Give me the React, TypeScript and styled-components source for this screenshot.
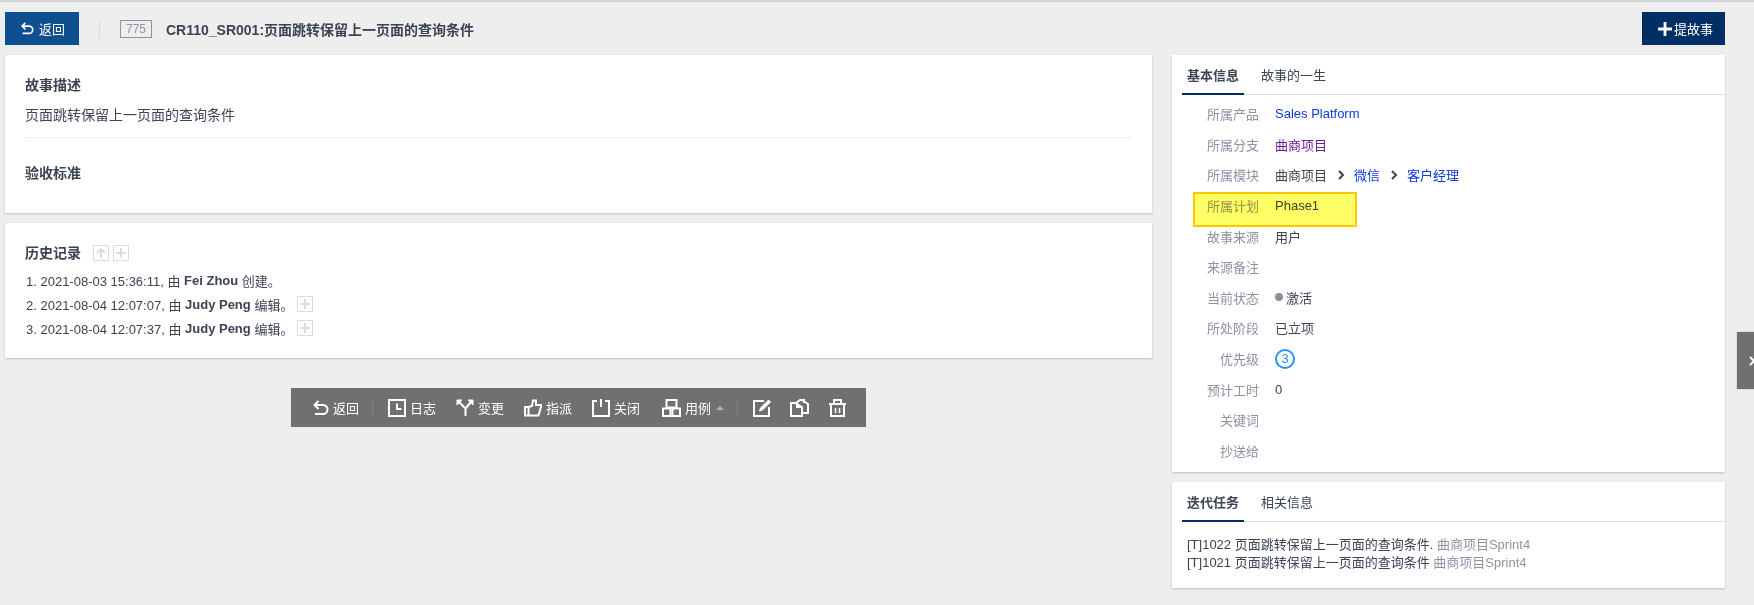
import * as React from 'react';
import styled, { createGlobalStyle } from 'styled-components';

const GlobalStyle = createGlobalStyle`
    html, body {
        margin: 0;
        padding: 0;
        background: #eeeeee;
    }
    body {
        font-family: "Liberation Sans", "Noto Sans CJK SC", sans-serif;
        font-size: 13px;
        color: #3c4353;
    }
`;

const Page = styled.div`
    position: relative;
    height: 605px;
    overflow: hidden;
    box-sizing: border-box;
    border-top: 2px solid #d2d2d2;
    padding: 10px 29px 0 5px;
`;

const Header = styled.div`
    display: flex;
    align-items: center;
    height: 33px;
`;

const BackButton = styled.div`
    display: flex;
    align-items: center;
    gap: 5px;
    width: 74px;
    height: 33px;
    box-sizing: border-box;
    padding-left: 15px;
    background: #0e4f8f;
    color: #fff;
`;

const HeaderDivider = styled.div`
    width: 1px;
    height: 20px;
    margin: 0 20px;
    background: #dcdcdc;
`;

const IdTag = styled.span`
    box-sizing: border-box;
    width: 32px;
    height: 18px;
    line-height: 16px;
    text-align: center;
    font-size: 12px;
    color: #8d93a5;
    border: 1px solid #8d93a5;
`;

const Title = styled.h1`
    flex: 1;
    margin: 0 0 0 14px;
    font-size: 14px;
    font-weight: 700;
    color: #3c4353;
`;

const SubmitButton = styled.div`
    display: flex;
    align-items: center;
    gap: 2px;
    width: 83px;
    height: 33px;
    box-sizing: border-box;
    padding-left: 16px;
    background: #002f65;
    color: #fff;
`;

const Columns = styled.div`
    display: grid;
    grid-template-columns: 1147px 553px;
    gap: 20px;
    margin-top: 10px;
`;

const Column = styled.div`
    display: flex;
    flex-direction: column;
    gap: 10px;
`;

const Card = styled.section`
    background: #fff;
    box-shadow: 0 1px 2px rgba(0, 0, 0, 0.2);
`;

const StoryCard = styled(Card)`
    height: 158px;
    box-sizing: border-box;
    padding: 20px 20px 0 20px;
`;

const HistoryCard = styled(Card)`
    height: 135px;
    box-sizing: border-box;
    padding: 21px 20px 0 20px;
`;

const SectionTitle = styled.div`
    font-weight: 700;
    font-size: 14px;
    line-height: 20px;
    color: #3c4353;
`;

const Description = styled.div`
    margin-top: 10px;
    font-size: 14px;
    line-height: 20px;
    padding-bottom: 12px;
    border-bottom: 1px solid #eeeeee;
`;

const AcceptTitle = styled(SectionTitle)`
    margin-top: 25px;
`;

const HistoryHead = styled.div`
    display: flex;
    align-items: center;
    height: 18px;
`;

const HistoryTitle = styled(SectionTitle)`
    margin-right: 12px;
`;

const SquareBtn = styled.span<{ $gap?: number }>`
    display: inline-flex;
    align-items: center;
    justify-content: center;
    box-sizing: border-box;
    width: 16px;
    height: 16px;
    margin-left: ${p => p.$gap ?? 0}px;
    border: 1px solid #d9dce6;
    color: #d9dce6;
`;

const HistoryList = styled.ol`
    list-style: none;
    margin: 6px 0 0 1px;
    padding: 0;
`;

const HistoryItem = styled.li`
    display: flex;
    align-items: center;
    height: 24px;
    white-space: pre;
    b {
        font-weight: 700;
    }
`;

const ToolbarWrap = styled.div`
    display: flex;
    justify-content: center;
    margin-top: 20px;
`;

const Toolbar = styled.div`
    display: flex;
    align-items: center;
    width: 575px;
    height: 39px;
    box-sizing: border-box;
    padding-left: 21px;
    background: #707070;
    color: #fff;
`;

const ToolButton = styled.div<{ $ml?: number }>`
    display: flex;
    align-items: center;
    gap: 4px;
    margin-left: ${p => p.$ml ?? 20}px;
`;

const ToolDivider = styled.div`
    width: 1px;
    height: 20px;
    margin: 0 15px 0 13px;
    background: #808080;
`;

const Caret = styled.span`
    width: 0;
    height: 0;
    margin-left: 1px;
    border-left: 4px solid transparent;
    border-right: 4px solid transparent;
    border-bottom: 4px solid #b5b5b5;
`;

const InfoCard = styled(Card)`
    height: 417px;
    box-sizing: border-box;
    padding: 0 0 0 10px;
`;

const TaskCard = styled(Card)`
    height: 106px;
    box-sizing: border-box;
    padding: 0 0 0 10px;
`;

const Tabs = styled.div`
    display: flex;
    height: 40px;
    box-sizing: border-box;
    border-bottom: 1px solid #dddddd;
`;

const Tab = styled.div<{ $active?: boolean }>`
    box-sizing: border-box;
    height: 40px;
    padding: ${p => (p.$active ? '0 5px' : '0 0 0 17px')};
    line-height: 42px;
    font-weight: ${p => (p.$active ? 700 : 400)};
    border-bottom: ${p => (p.$active ? '2px solid #002f65' : 'none')};
    color: #3c4353;
`;

const InfoList = styled.div`
    display: flex;
    flex-direction: column;
    padding-top: 3.5px;
`;

const InfoRow = styled.div<{ $marked?: boolean }>`
    position: relative;
    display: flex;
    align-items: center;
    height: 30.6px;
    ${p => p.$marked && `
        &::after {
            content: '';
            position: absolute;
            left: 11px;
            top: 2px;
            width: 164px;
            height: 35px;
            box-sizing: border-box;
            background: #ffff66;
            border: 2px solid #ffc800;
            mix-blend-mode: multiply;
        }
    `}
`;

const InfoLabel = styled.div`
    width: 77px;
    text-align: right;
    margin-right: 16px;
    color: #8d93a5;
`;

const InfoValue = styled.div`
    display: flex;
    align-items: center;
    color: #3c4353;
`;

const LinkText = styled.span<{ $visited?: boolean }>`
    color: ${p => (p.$visited ? '#6a1b9a' : '#0c3bd6')};
`;

const Sep = styled.span`
    display: inline-flex;
    margin: 0 9px 0 11px;
    color: #3c4353;
`;

const StatusDot = styled.span`
    width: 8px;
    height: 8px;
    margin-right: 3px;
    border-radius: 50%;
    background: #8a8fa0;
`;

const PriorityBadge = styled.span`
    box-sizing: border-box;
    width: 20px;
    height: 20px;
    line-height: 16px;
    text-align: center;
    border: 2px solid #2196f3;
    border-radius: 50%;
    color: #2196f3;
`;

const TaskList = styled.div`
    padding: 14px 0 0 5px;
    line-height: 18px;
`;

const TaskMeta = styled.span`
    color: #8d93a5;
`;

const SideHandle = styled.div`
    position: absolute;
    right: 0;
    top: 329px;
    box-sizing: border-box;
    width: 18px;
    height: 59px;
    padding-left: 12px;
    background: #707070;
    border: 1px solid #dcdcdc;
    border-right: none;
    color: #fff;
    display: flex;
    align-items: center;
    overflow: hidden;
`;

const Svg = styled.svg.attrs({ fill: 'none', stroke: 'currentColor', strokeWidth: 2 })`
    display: block;
    flex: none;
`;

const UndoIcon = ({ size = 17 }: { size?: number }) => (
    <Svg width={size} height={size - 1} viewBox="0 0 17 16" strokeWidth="2.6">
        <path d="M6.5 1L2.5 5l4 4" />
        <path d="M2.5 5H11a4.5 4.5 0 0 1 0 9H3" />
    </Svg>
);

const LogIcon = () => (
    <Svg width="18" height="18" viewBox="0 0 18 18">
        <rect x="1" y="1" width="16" height="16" />
        <path d="M9 4.5V10h4.5" />
    </Svg>
);

const ForkIcon = () => (
    <Svg width="18" height="18" viewBox="0 0 18 18" strokeWidth="2.4">
        <path d="M9.5 17V9.5L3 3" />
        <path d="M9.5 9.5L15 3" />
        <path d="M1 1h5L1 6zM17 1h-5l5 5z" fill="currentColor" strokeWidth="1" />
    </Svg>
);

const ThumbIcon = () => (
    <Svg width="18" height="18" viewBox="0 0 18 18">
        <path d="M1 8h3.5v8.5H1z" />
        <path d="M4.5 8L8 7l1-5.5h3V6h5.5l-3 10.5H4.5" />
    </Svg>
);

const CloseIcon = () => (
    <Svg width="18" height="18" viewBox="0 0 18 18">
        <path d="M5 2H1v15h16V2h-4" />
        <path d="M9 0v8" />
    </Svg>
);

const CaseIcon = () => (
    <Svg width="19" height="18" viewBox="0 0 19 18">
        <rect x="4.5" y="1" width="10" height="7.5" />
        <rect x="1" y="9.5" width="7.5" height="7.5" />
        <rect x="10.5" y="9.5" width="7.5" height="7.5" />
    </Svg>
);

const EditIcon = () => (
    <Svg width="18" height="18" viewBox="0 0 18 18">
        <path d="M11 2H1v15h15V8" />
        <path d="M6.5 12l1-3 8-8 2 2-8 8z" fill="currentColor" strokeWidth="1" />
    </Svg>
);

const CopyIcon = () => (
    <Svg width="19" height="18" viewBox="0 0 19 18">
        <path d="M5 4H1v13h11V8z" />
        <path d="M6 4l4-3h4v3M12 1l6 4v9h-6" />
        <path d="M7 4v4h5" />
    </Svg>
);

const TrashIcon = () => (
    <Svg width="19" height="18" viewBox="0 0 19 18">
        <path d="M1 5h17M6 4V1h7v3" />
        <path d="M3 5v12h13V5" />
        <path d="M7.5 9v5M11.5 9v5" strokeWidth="1.5" />
    </Svg>
);

const PlusGlyph = ({ size = 10, weight = 1.6 }: { size?: number; weight?: number }) => (
    <Svg width={size} height={size} viewBox="0 0 10 10" strokeWidth={weight}>
        <path d="M5 0v10M0 5h10" />
    </Svg>
);

const UpGlyph = () => (
    <Svg width="10" height="10" viewBox="0 0 10 10" strokeWidth="1.6">
        <path d="M5 10V1M1 5l4-4 4 4" />
    </Svg>
);

const Chevron = () => (
    <Svg width="7" height="10" viewBox="0 0 7 10" strokeWidth="1.6">
        <path d="M1 1l4 4-4 4" />
    </Svg>
);

const infoRows: Array<[string, React.ReactNode, boolean?]> = [
    ['所属产品', <LinkText>Sales Platform</LinkText>],
    ['所属分支', <LinkText $visited={true}>曲商项目</LinkText>],
    ['所属模块', (
        <>
            曲商项目
            <Sep><Chevron /></Sep>
            <LinkText>微信</LinkText>
            <Sep><Chevron /></Sep>
            <LinkText>客户经理</LinkText>
        </>
    )],
    ['所属计划', 'Phase1', true],
    ['故事来源', '用户'],
    ['来源备注', ''],
    ['当前状态', <><StatusDot />激活</>],
    ['所处阶段', '已立项'],
    ['优先级', <PriorityBadge>3</PriorityBadge>],
    ['预计工时', '0'],
    ['关键词', ''],
    ['抄送给', '']
];

export default function App() {
    return (
        <Page>
            <GlobalStyle />
            <Header>
                <BackButton><UndoIcon size={14} />返回</BackButton>
                <HeaderDivider />
                <IdTag>775</IdTag>
                <Title>CR110_SR001:页面跳转保留上一页面的查询条件</Title>
                <SubmitButton><PlusGlyph size={14} weight={1.15} />提故事</SubmitButton>
            </Header>
            <Columns>
                <Column>
                    <StoryCard>
                        <SectionTitle>故事描述</SectionTitle>
                        <Description>页面跳转保留上一页面的查询条件</Description>
                        <AcceptTitle>验收标准</AcceptTitle>
                    </StoryCard>
                    <HistoryCard>
                        <HistoryHead>
                            <HistoryTitle>历史记录</HistoryTitle>
                            <SquareBtn><UpGlyph /></SquareBtn>
                            <SquareBtn $gap={4}><PlusGlyph /></SquareBtn>
                        </HistoryHead>
                        <HistoryList>
                            <HistoryItem>1. 2021-08-03 15:36:11, 由 <b>Fei Zhou</b> 创建。</HistoryItem>
                            <HistoryItem>
                                2. 2021-08-04 12:07:07, 由 <b>Judy Peng</b> 编辑。
                                <SquareBtn $gap={4}><PlusGlyph /></SquareBtn>
                            </HistoryItem>
                            <HistoryItem>
                                3. 2021-08-04 12:07:37, 由 <b>Judy Peng</b> 编辑。
                                <SquareBtn $gap={4}><PlusGlyph /></SquareBtn>
                            </HistoryItem>
                        </HistoryList>
                    </HistoryCard>
                    <ToolbarWrap>
                        <Toolbar>
                            <ToolButton $ml={0}><UndoIcon />返回</ToolButton>
                            <ToolDivider />
                            <ToolButton $ml={0}><LogIcon />日志</ToolButton>
                            <ToolButton><ForkIcon />变更</ToolButton>
                            <ToolButton><ThumbIcon />指派</ToolButton>
                            <ToolButton><CloseIcon />关闭</ToolButton>
                            <ToolButton $ml={22}><CaseIcon />用例<Caret /></ToolButton>
                            <ToolDivider />
                            <ToolButton $ml={0}><EditIcon /></ToolButton>
                            <ToolButton $ml={19}><CopyIcon /></ToolButton>
                            <ToolButton $ml={19}><TrashIcon /></ToolButton>
                        </Toolbar>
                    </ToolbarWrap>
                </Column>
                <Column>
                    <InfoCard>
                        <Tabs>
                            <Tab $active={true}>基本信息</Tab>
                            <Tab>故事的一生</Tab>
                        </Tabs>
                        <InfoList>
                            {infoRows.map(([label, value, marked]) => (
                                <InfoRow key={label} $marked={marked}>
                                    <InfoLabel>{label}</InfoLabel>
                                    <InfoValue>{value}</InfoValue>
                                </InfoRow>
                            ))}
                        </InfoList>
                    </InfoCard>
                    <TaskCard>
                        <Tabs>
                            <Tab $active={true}>迭代任务</Tab>
                            <Tab>相关信息</Tab>
                        </Tabs>
                        <TaskList>
                            <div>[T]1022 页面跳转保留上一页面的查询条件. <TaskMeta>曲商项目Sprint4</TaskMeta></div>
                            <div>[T]1021 页面跳转保留上一页面的查询条件 <TaskMeta>曲商项目Sprint4</TaskMeta></div>
                        </TaskList>
                    </TaskCard>
                </Column>
            </Columns>
            <SideHandle><Chevron /></SideHandle>
        </Page>
    );
}
